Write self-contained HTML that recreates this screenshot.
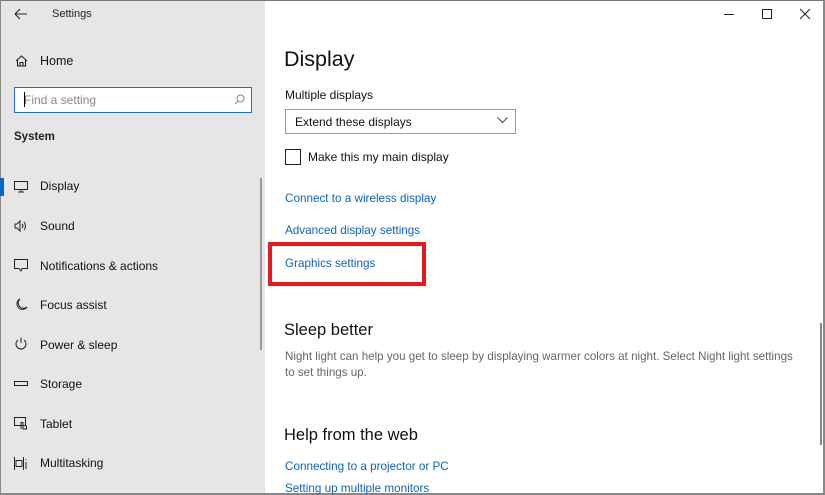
<!DOCTYPE html>
<html><head><meta charset="utf-8"><style>
*{margin:0;padding:0;box-sizing:border-box}
body{width:825px;height:495px;overflow:hidden;background:#fff;font-family:"Liberation Sans",sans-serif;color:#000;position:relative}
.a{position:absolute;white-space:nowrap}
.side{position:absolute;left:0;top:0;width:265px;height:495px;background:#e6e6e6}
.nav{font-size:12px;color:#111}
.lnk{font-size:11.7px;color:#0a66b8}
svg{position:absolute;overflow:visible}
</style></head><body>
<div class="side"></div>
<div class="a" style="left:0;top:0;width:825px;height:1px;background:#777"></div>
<div class="a" style="left:0;top:0;width:1px;height:495px;background:#888"></div>
<div class="a" style="left:823px;top:0;width:2px;height:495px;background:#888"></div>
<div class="a" style="left:0;top:493px;width:825px;height:2px;background:#888"></div>

<svg style="left:14px;top:8px" width="14" height="12"><path d="M1 6H13M1 6L6 1M1 6L6 11" stroke="#222" stroke-width="1.1" fill="none"/></svg>
<div class="a" style="left:52px;top:8px;font-size:11px;color:#222">Settings</div>

<svg style="left:15px;top:55px" width="13" height="12"><path d="M1 6L6.5 1L12 6M2.5 5V11H10.5V5M5 11V7.5H8V11" stroke="#222" stroke-width="1.1" fill="none"/></svg>
<div class="a nav" style="left:40px;top:54px;font-size:12.5px">Home</div>

<div class="a" style="left:14px;top:87px;width:238px;height:26px;border:1.5px solid #1c6fc1;background:#fff"></div>
<div class="a" style="left:24px;top:92px;width:1px;height:15px;background:#000"></div>
<div class="a" style="left:24px;top:93px;font-size:12px;color:#888">Find a setting</div>
<svg style="left:234px;top:94px" width="11" height="11"><circle cx="6.5" cy="4.5" r="3.5" stroke="#888" fill="none"/><path d="M4 7L1 10" stroke="#888"/></svg>

<div class="a" style="left:14px;top:131px;font-size:11.5px;font-weight:bold;color:#222">System</div>

<div class="a" style="left:0;top:178px;width:4px;height:18px;background:#0a66c2"></div>
<svg style="left:14px;top:181px" width="14" height="12"><rect x="0.5" y="0.5" width="13" height="8" stroke="#222" fill="none"/><path d="M4 11H10M7 9V11" stroke="#222"/></svg>
<div class="a nav" style="left:40px;top:179px">Display</div>
<svg style="left:14px;top:220px" width="14" height="12"><path d="M1 4H3L6 1V11L3 8H1Z" stroke="#222" fill="none"/><path d="M8 4Q10 6 8 8M10 2Q13 6 10 10" stroke="#222" fill="none"/></svg>
<div class="a nav" style="left:40px;top:219px">Sound</div>
<svg style="left:14px;top:259px" width="14" height="13"><path d="M0.5 0.5H13.5V9.5H8L7 12L5 9.5H0.5Z" stroke="#222" fill="none"/></svg>
<div class="a nav" style="left:40px;top:259px">Notifications &amp; actions</div>
<svg style="left:14px;top:298px" width="14" height="13"><path d="M6 1A5.5 5.5 0 1 0 13 9A5 5 0 0 1 6 1Z" stroke="#222" fill="none"/></svg>
<div class="a nav" style="left:40px;top:298px">Focus assist</div>
<svg style="left:14px;top:337px" width="14" height="14"><path d="M4 3A5 5 0 1 0 10 3M7 0.5V6" stroke="#222" fill="none"/></svg>
<div class="a nav" style="left:40px;top:338px">Power &amp; sleep</div>
<svg style="left:14px;top:381px" width="14" height="6"><rect x="0.5" y="0.5" width="13" height="4" stroke="#222" fill="none"/></svg>
<div class="a nav" style="left:40px;top:377px">Storage</div>
<svg style="left:14px;top:417px" width="14" height="13"><rect x="0.5" y="0.5" width="11" height="8" stroke="#222" fill="none"/><path d="M7 12V5.5H9V12H12.5V8.5" stroke="#222" fill="none"/></svg>
<div class="a nav" style="left:40px;top:417px">Tablet</div>
<svg style="left:14px;top:457px" width="14" height="13"><path d="M0.5 0V13M9.5 0V13M2 3.5H8V9.5H2ZM12 5V12M12 2V3" stroke="#222" fill="none"/></svg>
<div class="a nav" style="left:40px;top:456px">Multitasking</div>

<div class="a" style="left:260px;top:178px;width:2px;height:172px;background:#999"></div>

<div class="a" style="left:724px;top:14px;width:10px;height:1px;background:#222"></div>
<div class="a" style="left:762px;top:9px;width:10px;height:10px;border:1px solid #222"></div>
<svg style="left:800px;top:9px" width="10" height="10"><path d="M0 0L10 10M10 0L0 10" stroke="#222"/></svg>

<div class="a" style="left:284px;top:47px;font-size:21.5px;color:#111">Display</div>
<div class="a" style="left:285px;top:88px;font-size:12px;color:#111">Multiple displays</div>
<div class="a" style="left:285px;top:109px;width:231px;height:25px;border:1.5px solid #999;background:#fff"></div>
<div class="a" style="left:295px;top:115px;font-size:12px;color:#111">Extend these displays</div>
<svg style="left:497px;top:117px" width="11" height="7"><path d="M0.5 0.5L5.5 5.5L10.5 0.5" stroke="#444" fill="none"/></svg>
<div class="a" style="left:285px;top:149px;width:16px;height:16px;border:1.5px solid #222"></div>
<div class="a" style="left:308px;top:150px;font-size:12px;color:#111">Make this my main display</div>
<div class="a lnk" style="left:285px;top:192px">Connect to a wireless display</div>
<div class="a lnk" style="left:285px;top:224px">Advanced display settings</div>
<div class="a lnk" style="left:285px;top:257px">Graphics settings</div>
<div class="a" style="left:268px;top:242px;width:158px;height:44px;border:4px solid #e8191f"></div>

<div class="a" style="left:284px;top:321px;font-size:16.5px;color:#111">Sleep better</div>
<div class="a" style="left:285px;top:349px;font-size:11.6px;color:#666;line-height:16px">Night light can help you get to sleep by displaying warmer colors at night. Select Night light settings<br>to set things up.</div>
<div class="a" style="left:284px;top:426px;font-size:16.5px;color:#111">Help from the web</div>
<div class="a lnk" style="left:285px;top:460px">Connecting to a projector or PC</div>
<div class="a lnk" style="left:285px;top:482px">Setting up multiple monitors</div>
<div class="a" style="left:820px;top:323px;width:2px;height:122px;background:#888"></div>
</body></html>
